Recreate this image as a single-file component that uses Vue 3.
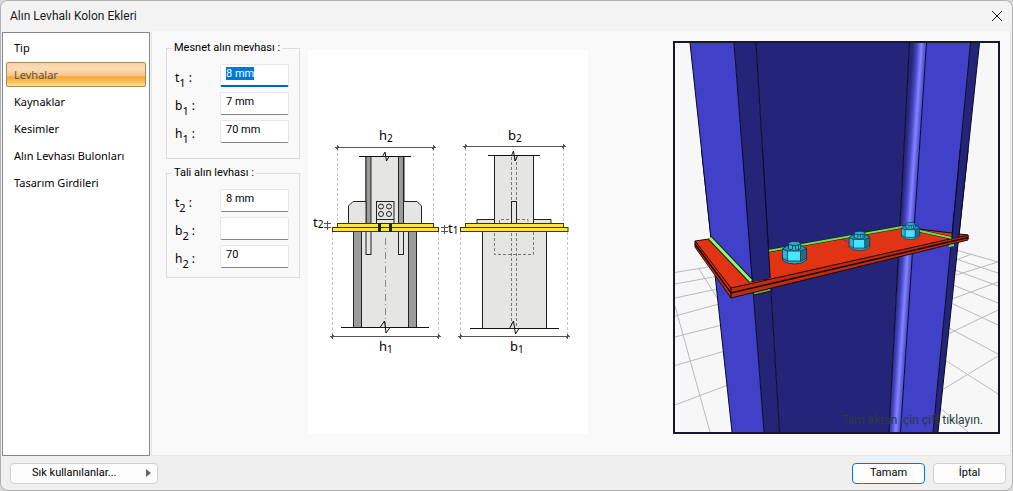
<script setup>
import { onMounted, ref } from 'vue'

const pages = ['Tip', 'Levhalar', 'Kaynaklar', 'Kesimler', 'Alın Levhası Bulonları', 'Tasarım Girdileri']
const active = ref('Levhalar')

const groups = ref([
  {
    title: 'Mesnet alın mevhası :',
    kind: 'main',
    fields: [
      { id: 't1', name: 't', sub: '1', value: '8 mm' },
      { id: 'b1', name: 'b', sub: '1', value: '7 mm' },
      { id: 'h1', name: 'h', sub: '1', value: '70 mm' }
    ]
  },
  {
    title: 'Tali alın levhası :',
    kind: 'secondary',
    fields: [
      { id: 't2', name: 't', sub: '2', value: '8 mm' },
      { id: 'b2', name: 'b', sub: '2', value: '' },
      { id: 'h2', name: 'h', sub: '2', value: '70' }
    ]
  }
])

const bolts = [
  { x: 794.5, y: 254, s: 1 },
  { x: 859.5, y: 242, s: 0.86 },
  { x: 910.5, y: 232, s: 0.76 }
]

onMounted(() => {
  const first = document.getElementById('t1')
  first.focus()
  first.select()
})
</script>

<template>
  <div class="window">
    <header class="titlebar">
      <h1>Alın Levhalı Kolon Ekleri</h1>
      <button class="close" aria-label="Kapat">
        <svg width="12" height="12" viewBox="0 0 12 12"><path d="M1 1 L11 11 M11 1 L1 11" /></svg>
      </button>
    </header>

    <main class="body">
      <nav class="pages">
        <button
          v-for="p in pages"
          :key="p"
          :class="{ active: p === active }"
          @click="active = p"
        >{{ p }}</button>
      </nav>

      <section class="panel">
        <form class="groups" @submit.prevent>
          <fieldset v-for="g in groups" :key="g.title" :class="g.kind">
            <legend>{{ g.title }}</legend>
            <div v-for="f in g.fields" :key="f.id" class="row">
              <label :for="f.id">{{ f.name }}<sub>{{ f.sub }}</sub> :</label>
              <input :id="f.id" v-model="f.value" type="text" autocomplete="off" />
            </div>
          </fieldset>
        </form>

        <svg class="diagram" viewBox="308 50 280 384">
          <g class="guide">
            <path d="M337.5 148V223 M433.5 148V223 M332.5 232V336 M438.5 232V336" />
            <path d="M465.5 148V223 M563.5 148V223 M460.5 232V336 M567.5 232V336" />
          </g>
          <g class="dim">
            <path d="M335 147.5H436 M337.5 145V150 M336 149L339 146 M433.5 145V150 M432 149L435 146" />
            <path d="M330 336.5H441 M332.5 334V339 M331 338L334 335 M438.5 334V339 M437 338L440 335" />
            <path d="M463 146.5H566 M465.5 144V149 M464 148L467 145 M563.5 144V149 M562 148L565 145" />
            <path d="M458 336.5H570 M460.5 334V339 M459 338L462 335 M567.5 334V339 M566 338L569 335" />
            <path d="M324 223.5H331 M324 227.5H331 M327.5 221V230" />
            <path d="M441 227.5H448 M441 231.5H448 M444.5 225V234" />
          </g>

          <g class="part">
            <rect class="grey" x="366" y="156.5" width="38" height="67" />
            <rect class="flange" x="366" y="156.5" width="5" height="67" />
            <rect class="flange" x="398.5" y="156.5" width="5" height="67" />
            <path class="grey" d="M366 201.5H353L348.5 206V223.5H366Z" />
            <path class="grey" d="M403.5 201.5H417L421.5 206V223.5H403.5Z" />
            <rect class="grey" x="376.5" y="201.5" width="17.5" height="22" />
            <path d="M376.5 219.5H394" />
            <circle cx="381" cy="206.5" r="2.5" />
            <circle cx="389" cy="206.5" r="2.5" />
            <circle cx="381" cy="214" r="2.5" />
            <circle cx="389" cy="214" r="2.5" />
            <rect class="grey" x="353.5" y="231.5" width="63" height="96" />
            <rect class="flange" x="353.5" y="231.5" width="8" height="96" />
            <rect class="flange" x="408.5" y="231.5" width="8" height="96" />
            <rect class="grey" x="366" y="231.5" width="5" height="23" />
            <rect class="grey" x="398.5" y="231.5" width="5" height="23" />
            <rect class="yellow" x="337.5" y="223.5" width="96" height="4" />
            <rect class="yellow" x="332.5" y="227.5" width="106" height="4" />
            <path class="stud" d="M379.5 223V232 M390.5 223V232" />
            <path class="axis" d="M385.5 238V327" />
            <path class="break" d="M359 156.5H382.5L385 152L386.5 161L389 156.5H411" />
            <path class="break" d="M341 327.5H380L384.5 321L386 333L390 327.5H429" />
          </g>

          <g class="part">
            <rect class="grey" x="494.5" y="155.5" width="39" height="68" />
            <path class="grey" d="M477 219.5H494.5V223.5H477Z M533.5 219.5H551V223.5H533.5Z" />
            <path class="hidden" d="M511.5 157V201 M516.5 157V201 M499.5 223V219.5H511 M517 219.5H528V223" />
            <rect class="grey" x="511.5" y="201.5" width="5" height="22" />
            <rect class="grey" x="482.5" y="231.5" width="64" height="97" />
            <path class="hidden" d="M511.5 233V328 M516.5 233V328 M494.5 233V254.5H533.5V232" />
            <rect class="yellow" x="465.5" y="223.5" width="98" height="4" />
            <rect class="yellow" x="460.5" y="227.5" width="107.5" height="4" />
            <path class="break" d="M488 155.5H511.5L513.5 151L515 161L517.5 155.5H540" />
            <path class="break" d="M470 328.5H509.5L513.5 321L515.5 334L519 328.5H559" />
          </g>

          <g class="caption">
            <text x="379" y="140">h<tspan class="index" dy="2">2</tspan></text>
            <text x="379" y="351">h<tspan class="index" dy="2">1</tspan></text>
            <text x="508" y="140">b<tspan class="index" dy="2">2</tspan></text>
            <text x="510" y="351">b<tspan class="index" dy="2">1</tspan></text>
            <text x="313" y="227">t<tspan class="index" dy="1">2</tspan></text>
            <text x="448" y="233">t<tspan class="index" dy="1">1</tspan></text>
          </g>
        </svg>

        <div class="preview">
          <svg viewBox="675 43 323 389">
            <defs>
              <linearGradient id="fillet" gradientUnits="userSpaceOnUse" x1="900" y1="236" x2="915" y2="237">
                <stop offset="0" stop-color="#26267a" />
                <stop offset="0.3" stop-color="#4646c8" />
                <stop offset="0.58" stop-color="#8684ff" />
                <stop offset="0.78" stop-color="#5a58e0" />
                <stop offset="1" stop-color="#3e3ec4" />
              </linearGradient>
              <linearGradient id="nut" x1="0" x2="1">
                <stop offset="0.18" stop-color="#2fb4d4" />
                <stop offset="0.19" stop-color="#48e4fc" />
                <stop offset="0.74" stop-color="#48e4fc" />
                <stop offset="0.75" stop-color="#1f7088" />
              </linearGradient>
            </defs>

            <g class="grid">
              <path d="M675 272.500L708 267 M675 284L716 276.500 M675 298L717 289 M675 316L719 304 M675 337L722 325 M675 365.500L725 351 M675 405L728 385" />
              <path d="M699 269L722 306 M675 306L710 432" />
              <path d="M956 250L998 262 M956 259L998 273 M955 270L998 286 M953 285L998 303 M951 303L998 325 M949 328L998 354 M945 360L998 394 M940 408L968 432" />
              <path d="M956 260L972 254 M956 275L998 262 M952 299L998 282 M948 334L998 310 M942 390L998 356" />
            </g>

            <polygon class="light" points="690,43 734,43 764,432 732,432" />
            <polygon class="dark" points="734,43 756,43 779.5,432 764,432" />
            <polygon class="dark" points="756,43 909.5,43 889,432 779.5,432" />
            <polygon class="strip" points="909.5,43 926.5,43 900.5,432 889,432" />
            <polygon class="light" points="926.5,43 970.5,43 933,432 900.5,432" />
            <polygon class="dark" points="970.5,43 979.5,43 938,432 933,432" />
            <path class="edge" d="M690 43L732 432 M734 43L764 432 M756 43L779.5 432 M909.5 43L889 432 M926.5 43L900.5 432 M970.5 43L933 432 M979.5 43L938 432" />

            <polygon class="weld" points="752,291 771,288 771,291 754,295" />
            <polygon class="red" points="695,241 709,239 752,281 768,279 768,252 902,227 968,235 968,239 731,290" />
            <polygon class="side" points="695,241 731,288 731,298 695,247" />
            <polygon class="front" points="731,288 968,235 968,240 731,298" />
            <path class="seam" d="M695 244L731 293L968 237.5" />
            <path class="mark" d="M840 238L850 243" />

            <path class="weldshade" d="M768 251L902 227L952 238" />
            <path class="weldline" d="M768 251L902 227L952 238" />
            <polygon class="light" points="701.5,150 742.3,150 752.3,280 711,239" />
            <polygon class="dark" points="742.3,150 762.5,150 770.2,278 752.3,282" />
            <path class="edge" d="M701.5 150L711 239 M742.3 150L752.3 282 M762.5 150L770.2 278" />
            <path class="weldshade thick" d="M710 238L751 281" />
            <path class="weldline thick" d="M710 238L751 281" />
            <polygon class="dark" points="960.2,150 968.1,150 958.8,237 951.8,239" />
            <path class="edge" d="M960.2 150L951.8 239 M968.1 150L958.8 237" />
            <path class="weldline" d="M949 246L954 245" />

            <g v-for="b in bolts" :key="b.x" class="bolt" :transform="`translate(${b.x} ${b.y}) scale(${b.s})`">
              <path class="washer" d="M-12 4V6Q-8 10 0 10Q8 10 12 6V4Z" />
              <path fill="url(#nut)" d="M-12 -5L-8 -8H8L12 -5V4L7 7H-7L-12 4Z" />
              <path class="top" d="M-12 -5L-8 -8H8L12 -5L6 -3H-7Z" />
              <path class="facet" d="M-7 -3V7 M6 -3V7" />
              <path class="shank" d="M-6 -11V-5Q0 -2 6 -5V-11Z" />
              <path class="facet" d="M-2 -9V-5 M1 -9V-5 M4 -9V-5" />
              <ellipse class="head" cx="0" cy="-10.5" rx="6" ry="2" />
            </g>
          </svg>
          <span class="hint">Tam ekran için çift tıklayın.</span>
        </div>
      </section>
    </main>

    <footer class="footer">
      <button class="favorites"><span>Sık kullanılanlar...</span><i class="arrow"></i></button>
      <button class="ok">Tamam</button>
      <button>İptal</button>
    </footer>
  </div>
</template>

<style>
body {
  margin: 0;
  background: #d8d8d8;
}
</style>

<style scoped>
.window {
  box-sizing: border-box;
  min-height: 100vh;
  display: flex;
  flex-direction: column;
  border: 1px solid #b0b0b0;
  border-radius: 8px;
  background: #efefef;
  overflow: hidden;
  color: #000;
  font: 11px/14px "Noto Sans", "Open Sans", sans-serif;
}
button, input {
  font: inherit;
  color: inherit;
}
.titlebar {
  height: 30px;
  display: flex;
  align-items: center;
  justify-content: space-between;
  padding: 0 9px;
  background: #f3f3f3;
}
h1 {
  margin: 0;
  font-family: Roboto, "Noto Sans", sans-serif;
  font-size: 12px;
  font-weight: 400;
  color: #1a1a1a;
}
.close {
  display: flex;
  padding: 0;
  border: 0;
  background: none;
}
.close path {
  fill: none;
  stroke: #1a1a1a;
}
.body {
  flex: 1;
  display: flex;
  background: #f3f3f3;
}
.pages {
  box-sizing: border-box;
  width: 148px;
  flex: none;
  display: flex;
  flex-direction: column;
  gap: 2px;
  margin: 1px 1px 0;
  padding: 2px 3px;
  border: 1px solid #828790;
  background: #fff;
}
.pages button {
  height: 25px;
  padding: 0 0 0 7px;
  border: 1px solid transparent;
  border-radius: 2px;
  background: none;
  text-align: left;
}
.pages button.active {
  border-color: #a88a55;
  background: linear-gradient(#f9d2a4 0, #fbdcb6 25%, #f9c489 55%, #f5a63a 60%, #fbc65c 85%, #fde38b 100%);
  color: #5a5146;
}
.panel {
  flex: 1;
  display: flex;
  align-items: flex-start;
  padding: 10px 10px 20px 14px;
  border: 1px solid #e5e5e5;
  border-top: 0;
  margin-right: 1px;
  background: #f9f9f9;
}
.groups {
  width: 134px;
  flex: none;
  font-family: Roboto, "Noto Sans", sans-serif;
}
fieldset {
  min-width: 0;
  margin: 0 0 7px;
  padding: 9px 10px 15px 8px;
  border: 1px solid #dcdcdc;
}
fieldset.secondary {
  padding-bottom: 9px;
}
legend {
  margin-left: -3px;
  padding: 0 2px;
}
.row {
  display: flex;
  justify-content: space-between;
  align-items: center;
}
.row + .row {
  margin-top: 5px;
}
label {
  padding-top: 4px;
  font-family: "Noto Sans", sans-serif;
  font-size: 12px;
}
sub {
  position: relative;
  top: 5px;
  vertical-align: baseline;
  font-size: 11px;
}
input {
  box-sizing: border-box;
  width: 69px;
  height: 23px;
  padding: 0 4px 4px 5px;
  border: 1px solid #e6e6e6;
  border-bottom-color: #868686;
  border-radius: 2px;
  outline: 0;
  background: #fff;
}
input:focus {
  border-bottom: 2px solid #0067c0;
  padding-bottom: 3px;
}
input::selection {
  background: #0078d7;
  color: #fff;
}
.diagram {
  flex: 0 1 280px;
  min-width: 0;
  margin: 9px 8px 0;
  background: #fff;
}
.guide path {
  fill: none;
  stroke: #c4c4c4;
  stroke-dasharray: 3 2;
}
.dim path {
  fill: none;
  stroke: #555;
}
.part path, .part rect, .part circle {
  fill: none;
  stroke: #222;
}
.part .grey {
  fill: #e5e5e4;
}
.part .flange {
  fill: #9b9b9b;
}
.part .yellow {
  fill: #fde53f;
  stroke: #3a3410;
}
.part .stud {
  stroke-width: 3;
}
.part .axis {
  stroke: #8a8a8a;
  stroke-dasharray: 7 3 1 3;
}
.part .hidden {
  stroke: #777;
  stroke-dasharray: 3 2;
}
.part .break {
  stroke: #111;
}
.caption {
  font-size: 13px;
}
.caption .index {
  font-size: 10px;
}
.preview {
  position: relative;
  box-sizing: border-box;
  flex: 0 0 327px;
  margin-left: auto;
  border: 2px solid #16162e;
  background: #f7f7f7;
}
.preview svg {
  display: block;
  width: 100%;
}
.hint {
  position: absolute;
  right: 15px;
  bottom: 5px;
  color: #2a3c40;
  font-family: Roboto, "Noto Sans", sans-serif;
  font-size: 12px;
}
.grid path {
  fill: none;
  stroke: #b9bab8;
}
.light {
  fill: #4040c8;
}
.dark {
  fill: #242478;
}
.strip {
  fill: url(#fillet);
}
.edge {
  fill: none;
  stroke: #0a0a20;
}
.red, .front, .side, .weld {
  stroke: #1c0808;
}
.red {
  fill: #e03414;
}
.front {
  fill: #c02c10;
}
.side {
  fill: #d03010;
}
.weld {
  fill: #58b848;
}
.seam {
  fill: none;
  stroke: #150404;
  stroke-width: 1.5;
}
.mark {
  stroke: #2020ff;
  stroke-dasharray: 2 1;
}
.weldshade {
  fill: none;
  stroke: #0c200c;
  stroke-width: 3;
}
.weldshade.thick {
  stroke-width: 5;
}
.weldline {
  fill: none;
  stroke: #70dc58;
  stroke-width: 2;
}
.weldline.thick {
  stroke: #90f878;
  stroke-width: 3;
}
.bolt {
  stroke: #06303c;
  stroke-width: 0.8;
}
.bolt .washer {
  fill: #2fa8c8;
}
.bolt .top {
  fill: #2898b8;
}
.bolt .facet {
  fill: none;
}
.bolt .shank {
  fill: #38b8d8;
}
.bolt .head {
  fill: #2fa8d0;
}
.footer {
  display: flex;
  align-items: center;
  gap: 8px;
  height: 34px;
  padding: 0 6px 0 9px;
  font-family: Roboto, "Noto Sans", sans-serif;
}
.footer button {
  box-sizing: border-box;
  width: 73px;
  height: 21px;
  padding: 0;
  border: 1px solid #d0d0d0;
  border-radius: 4px;
  background: #fdfdfd;
}
.footer .ok {
  border-color: #0078d4;
}
.footer .favorites {
  width: 148px;
  display: flex;
  align-items: center;
  justify-content: space-between;
  margin-right: auto;
  padding: 0 6px 0 21px;
}
.arrow {
  border: 4px solid transparent;
  border-right: 0;
  border-left: 5px solid #666;
}
</style>
